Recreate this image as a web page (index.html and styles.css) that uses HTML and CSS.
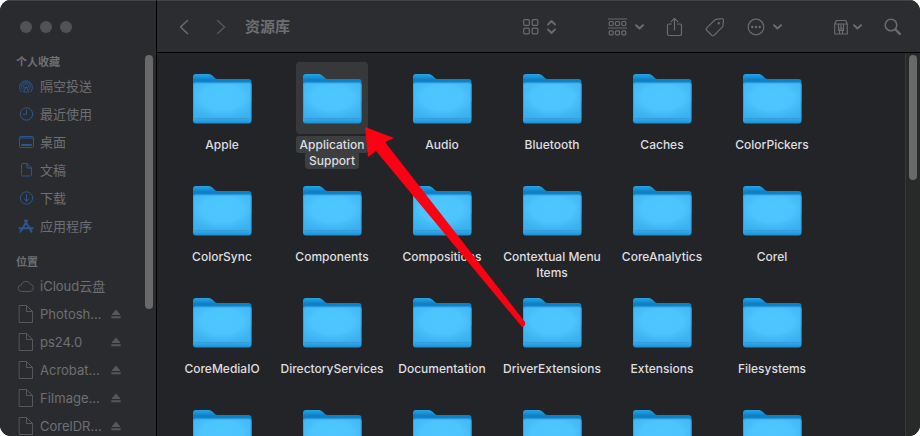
FILE: index.html
```html
<!DOCTYPE html>
<html lang="zh-CN">
<head>
<meta charset="utf-8">
<meta name="viewport" content="width=device-width, initial-scale=1">
<title>资源库</title>
<link rel="stylesheet" href="styles.css">
</head>
<body>
<svg class="defs" width="0" height="0" aria-hidden="true">
  <defs>
    <linearGradient id="back" x1="0" y1="0" x2="0" y2="1">
      <stop offset="0" stop-color="#27a5e8"/><stop offset=".2" stop-color="#0f80c6"/><stop offset="1" stop-color="#0f80c6"/>
    </linearGradient>
    <linearGradient id="edge" x1="0" y1="0" x2="0" y2="1">
      <stop offset="0" stop-color="#44bbf6"/><stop offset=".85" stop-color="#3bafee"/><stop offset=".93" stop-color="#2b9fe0"/><stop offset="1" stop-color="#1b8fd2"/>
    </linearGradient>
    <radialGradient id="glow" cx=".5" cy=".4" r=".75">
      <stop offset="0" stop-color="#50c6ff"/><stop offset=".5" stop-color="#4dc4fe"/><stop offset="1" stop-color="#3db3f0" stop-opacity="0"/>
    </radialGradient>
    <symbol id="folder" viewBox="0 0 72 72">
      <path fill="url(#back)" d="M7 15a3 3 0 0 1 3-3h12c2 0 3 .5 4.300 1.600l2.700 2.300c.8.700 1.500 1.100 3 1.100H62.500a3 3 0 0 1 3 3v20H7z"/>
      <path fill="url(#edge)" d="M7 23a2.500 2.500 0 0 1 2.500-2.500h53.500a2.500 2.500 0 0 1 2.500 2.500v35.500a3 3 0 0 1-3 3H10a3 3 0 0 1-3-3z"/>
      <path fill="url(#glow)" d="M8 23.500a2 2 0 0 1 2-2h52.500a2 2 0 0 1 2 2V56H8z"/>
      <path fill="none" stroke="#2695d6" stroke-opacity=".5" d="M7.500 57V23.500a2.500 2.500 0 0 1 2.500-2.500h52.500a2.500 2.500 0 0 1 2.500 2.500V57M8 56.500h57"/>
    </symbol>
    <symbol id="doc" viewBox="0 0 20 20">
      <path d="M3.500 1.500h7l6 6v11h-13zM10.500 1.500v6h6"/>
    </symbol>
    <symbol id="eject" viewBox="0 0 10 10">
      <path d="M5 .5 9.700 6H.3zM.3 7.300h9.400v2H.3z"/>
    </symbol>
    <symbol id="chevron" viewBox="0 0 9 6">
      <path d="m1 1.200 3.500 3.300L8 1.200"/>
    </symbol>
  </defs>
</svg>

<div class="window">
  <aside class="sidebar">
    <div class="lights">
      <button class="light" aria-label="关闭"></button>
      <button class="light" aria-label="最小化"></button>
      <button class="light" aria-label="缩放"></button>
    </div>
    <div class="sidebar-body">
      <nav class="places">
        <h2 class="heading">个人收藏</h2>
        <a class="place" href="#"><svg class="place-icon" viewBox="0 0 20 20"><path d="M5.300 15.800a6.500 6.500 0 1 1 9.400 0M6.800 13.600a4.500 4.500 0 1 1 6.400 0M8.300 12a2.500 2.500 0 1 1 3.400 0"/><path d="M10 10.800 7.500 16h5z"/></svg><span class="name">隔空投送</span></a>
        <a class="place" href="#"><svg class="place-icon" viewBox="0 0 20 20"><circle cx="10.500" cy="10" r="6.200"/><path d="M10.500 6v4.300H7.300"/></svg><span class="name">最近使用</span></a>
        <a class="place" href="#"><svg class="place-icon" viewBox="0 0 20 20"><rect x="3.500" y="4.500" width="14" height="11" rx="1"/><path d="M4 6h13"/><path stroke-width="2" d="M6 13h9"/></svg><span class="name">桌面</span></a>
        <a class="place" href="#"><svg class="place-icon" viewBox="0 0 20 20"><path d="M5.500 4.500a1 1 0 0 1 1-1h4.500l4.500 4.500v7a1 1 0 0 1-1 1h-8a1 1 0 0 1-1-1zM11 3.500V8h4.500"/></svg><span class="name">文稿</span></a>
        <a class="place" href="#"><svg class="place-icon" viewBox="0 0 20 20"><circle cx="10.500" cy="10" r="6.200"/><path d="M10.500 6.500v6.500M8.300 11l2.200 2.200 2.200-2.200"/></svg><span class="name">下载</span></a>
        <a class="place" href="#"><svg class="place-icon bold" viewBox="0 0 20 20"><path d="m11 4.500-5 9M9 4.500l6.500 11.200M3.500 12.300h8M14 12.300h2.500M5.200 14.300l-.9 1.500"/></svg><span class="name">应用程序</span></a>
        <h2 class="heading spaced">位置</h2>
        <a class="place" href="#"><svg class="place-icon grey" viewBox="0 0 20 20"><path d="M5.500 15.500a3.200 3.200 0 0 1-.3-6.400 4.800 4.800 0 0 1 9.100-1 3.800 3.800 0 0 1 .2 7.400z"/></svg><span class="name">iCloud云盘</span></a>
        <a class="place" href="#"><svg class="place-icon grey"><use href="#doc"/></svg><span class="name">Photosh...</span><svg class="eject"><use href="#eject"/></svg></a>
        <a class="place" href="#"><svg class="place-icon grey"><use href="#doc"/></svg><span class="name">ps24.0</span><svg class="eject"><use href="#eject"/></svg></a>
        <a class="place" href="#"><svg class="place-icon grey"><use href="#doc"/></svg><span class="name">Acrobat...</span><svg class="eject"><use href="#eject"/></svg></a>
        <a class="place" href="#"><svg class="place-icon grey"><use href="#doc"/></svg><span class="name">FiImage...</span><svg class="eject"><use href="#eject"/></svg></a>
        <a class="place" href="#"><svg class="place-icon grey"><use href="#doc"/></svg><span class="name">CorelDR...</span><svg class="eject"><use href="#eject"/></svg></a>
      </nav>
      <div class="side-track"><div class="thumb side-thumb"></div></div>
    </div>
  </aside>

  <main class="main">
    <header class="toolbar">
      <div class="nav">
        <button class="tool" aria-label="后退"><svg width="10" height="16" viewBox="0 0 10 16"><path class="mid" d="M8.500 1.500 1.500 8l7 6.500"/></svg></button>
        <button class="tool dim" aria-label="前进"><svg width="10" height="16" viewBox="0 0 10 16"><path class="mid" d="M1.500 1.500 8.500 8l-7 6.500"/></svg></button>
        <h1 class="title">资源库</h1>
      </div>
      <div class="tools">
        <button class="tool" aria-label="显示方式">
          <svg width="16" height="16" viewBox="0 0 16 16"><rect x=".7" y=".7" width="5.600" height="5.600" rx="1"/><rect x="9.200" y=".7" width="5.600" height="5.600" rx="1"/><rect x=".7" y="9.200" width="5.600" height="5.600" rx="1"/><rect x="9.200" y="9.200" width="5.600" height="5.600" rx="1"/></svg>
          <svg width="9" height="16" viewBox="0 0 9 16"><path class="bold" d="M1 5.500 4.500 2 8 5.500M1 10.500 4.500 14 8 10.500"/></svg>
        </button>
        <button class="tool apart" aria-label="分组">
          <svg width="19" height="18" viewBox="0 0 19 18"><path d="M.5 1h18M.5 10h18"/><rect x="1.200" y="3.500" width="4" height="4" rx="1"/><rect x="7.500" y="3.500" width="4" height="4" rx="1"/><rect x="13.800" y="3.500" width="4" height="4" rx="1"/><rect x="1.200" y="12.800" width="4" height="4" rx="1"/><rect x="7.500" y="12.800" width="4" height="4" rx="1"/><rect x="13.800" y="12.800" width="4" height="4" rx="1"/></svg>
          <svg class="chevron"><use href="#chevron"/></svg>
        </button>
        <button class="tool" aria-label="共享"><svg width="17" height="20" viewBox="0 0 17 20"><path d="M5.500 7H3a1.500 1.500 0 0 0-1.500 1.500v8.500A1.500 1.500 0 0 0 3 18.500h11a1.500 1.500 0 0 0 1.500-1.500V8.500A1.500 1.500 0 0 0 14 7h-2.500M8.500 13V1.500M5.200 4.700l3.300-3.300 3.300 3.300"/></svg></button>
        <button class="tool" aria-label="标签"><svg width="20" height="20" viewBox="0 0 20 20"><path d="M1.600 11.200 9.800 3a2.500 2.500 0 0 1 1.500-.7l5.500-.6a1.500 1.500 0 0 1 1.700 1.700l-.6 5.300a2.500 2.500 0 0 1-.7 1.500L9 18.400a1.500 1.500 0 0 1-2.100 0l-5.300-5.200a1.500 1.500 0 0 1 0-2z"/><circle cx="13.800" cy="6.300" r=".6"/></svg></button>
        <button class="tool" aria-label="操作">
          <svg width="18" height="18" viewBox="0 0 18 18"><circle cx="9" cy="9" r="7.800"/><g class="solid"><circle cx="5.300" cy="9" r="1.200"/><circle cx="9" cy="9" r="1.200"/><circle cx="12.700" cy="9" r="1.200"/></g></svg>
          <svg class="chevron"><use href="#chevron"/></svg>
        </button>
        <button class="tool apart tight" aria-label="压缩">
          <svg width="14" height="16" viewBox="0 0 14 16"><path d="M.7 5h12.600v10H.7zM.7 5l1.600-3.500h9.400L13.300 5M4.500 5v6.500h1v3.500M9.500 5v6.500h-1v3.500M7 6v2"/><rect x="6" y="9" width="2" height="2.500"/></svg>
          <svg class="chevron"><use href="#chevron"/></svg>
        </button>
        <button class="tool" aria-label="搜索"><svg width="17" height="17" viewBox="0 0 17 17"><circle class="mid" cx="7" cy="7" r="5.800"/><path class="heavy" d="m11.500 11.500 4.300 4.300"/></svg></button>
      </div>
    </header>

    <div class="content">
      <div class="grid">
        <button class="item"><svg class="folder"><use href="#folder"/></svg><span class="label"><span>Apple</span></span></button>
        <button class="item selected"><svg class="folder"><use href="#folder"/></svg><span class="label"><span>Application Support</span></span></button>
        <button class="item"><svg class="folder"><use href="#folder"/></svg><span class="label"><span>Audio</span></span></button>
        <button class="item"><svg class="folder"><use href="#folder"/></svg><span class="label"><span>Bluetooth</span></span></button>
        <button class="item"><svg class="folder"><use href="#folder"/></svg><span class="label"><span>Caches</span></span></button>
        <button class="item"><svg class="folder"><use href="#folder"/></svg><span class="label"><span>ColorPickers</span></span></button>
        <button class="item"><svg class="folder"><use href="#folder"/></svg><span class="label"><span>ColorSync</span></span></button>
        <button class="item"><svg class="folder"><use href="#folder"/></svg><span class="label"><span>Components</span></span></button>
        <button class="item"><svg class="folder"><use href="#folder"/></svg><span class="label"><span>Compositions</span></span></button>
        <button class="item"><svg class="folder"><use href="#folder"/></svg><span class="label"><span>Contextual Menu Items</span></span></button>
        <button class="item"><svg class="folder"><use href="#folder"/></svg><span class="label"><span>CoreAnalytics</span></span></button>
        <button class="item"><svg class="folder"><use href="#folder"/></svg><span class="label"><span>Corel</span></span></button>
        <button class="item"><svg class="folder"><use href="#folder"/></svg><span class="label"><span>CoreMediaIO</span></span></button>
        <button class="item"><svg class="folder"><use href="#folder"/></svg><span class="label"><span>DirectoryServices</span></span></button>
        <button class="item"><svg class="folder"><use href="#folder"/></svg><span class="label"><span>Documentation</span></span></button>
        <button class="item"><svg class="folder"><use href="#folder"/></svg><span class="label"><span>DriverExtensions</span></span></button>
        <button class="item"><svg class="folder"><use href="#folder"/></svg><span class="label"><span>Extensions</span></span></button>
        <button class="item"><svg class="folder"><use href="#folder"/></svg><span class="label"><span>Filesystems</span></span></button>
        <button class="item" aria-label="文件夹"><svg class="folder"><use href="#folder"/></svg></button>
        <button class="item" aria-label="文件夹"><svg class="folder"><use href="#folder"/></svg></button>
        <button class="item" aria-label="文件夹"><svg class="folder"><use href="#folder"/></svg></button>
        <button class="item" aria-label="文件夹"><svg class="folder"><use href="#folder"/></svg></button>
        <button class="item" aria-label="文件夹"><svg class="folder"><use href="#folder"/></svg></button>
        <button class="item" aria-label="文件夹"><svg class="folder"><use href="#folder"/></svg></button>
      </div>
      <div class="track"><div class="thumb"></div></div>
      <svg class="arrow" width="162" height="204" viewBox="0 0 162 204" aria-hidden="true"><path d="M0 0 29 11 20 15 160 195Q161 199 157 200L11 24 3 30z"/></svg>
    </div>
  </main>
</div>
</body>
</html>
```
FILE: styles.css
```css
* {
  box-sizing: border-box;
}

body {
  margin: 0;
  background: #fff;
  font-family: Inter, "Noto Sans CJK SC", sans-serif;
  font-size: 13px;
  color: #6e6f72;
}

button {
  margin: 0;
  padding: 0;
  border: 0;
  background: none;
  font: inherit;
  color: inherit;
}

svg {
  display: block;
  flex: none;
}

.defs {
  position: absolute;
}

.window {
  display: flex;
  height: 100vh;
  overflow: hidden;
  border-radius: 11px;
  background: #232427;
}

/* Sidebar */
.sidebar {
  display: flex;
  flex-direction: column;
  flex: none;
  width: 157px;
  border-top: 1px solid #434447;
  border-right: 1px solid #000;
  background: #2a2b2f;
}

.lights {
  display: flex;
  flex: none;
  align-items: center;
  gap: 8px;
  height: 51px;
  padding-left: 20px;
}

.light {
  width: 12px;
  height: 12px;
  border-radius: 50%;
  background: #515255;
}

.sidebar-body {
  display: flex;
  flex: 1;
  min-height: 0;
}

.places {
  flex: 1;
  min-width: 0;
  padding-left: 16px;
}

.heading {
  margin: 0;
  font-size: 11px;
  font-weight: 700;
  line-height: 20px;
}

.spaced {
  margin-top: 12px;
}

.place {
  display: flex;
  align-items: center;
  height: 28px;
  color: inherit;
  text-decoration: none;
}

.place-icon {
  width: 20px;
  height: 20px;
  margin-right: 4px;
  fill: none;
  stroke: #2c5690;
  stroke-width: 1;
  stroke-linejoin: round;
  stroke-linecap: round;
}

.place-icon.bold {
  stroke-width: 2;
}

.place-icon.grey {
  stroke: #56575a;
}

.name {
  width: 71px;
  line-height: 20px;
  white-space: nowrap;
}

.eject {
  width: 10px;
  height: 10px;
  fill: #56575a;
}

.side-track {
  flex: none;
  width: 11px;
  padding-top: 3px;
}

.thumb {
  width: 8px;
  height: 125px;
  border-radius: 4px;
  background: #69696a;
}

.side-thumb {
  height: 254px;
}

/* Toolbar */
.main {
  display: flex;
  flex: 1;
  flex-direction: column;
  min-width: 0;
}

.toolbar {
  display: flex;
  flex: none;
  align-items: center;
  justify-content: space-between;
  height: 53px;
  padding: 0 19px 0 22px;
  border-top: 1px solid #434447;
  border-bottom: 1px solid #000;
  background: #2c2d30;
}

.nav,
.tools {
  display: flex;
  align-items: center;
}

.nav .tool {
  margin-right: 27px;
}

.nav .dim {
  margin-right: 19px;
}

.title {
  margin: 0;
  font-size: 15px;
  font-weight: 700;
  line-height: 20px;
}

.tools {
  gap: 22px;
}

.tool {
  display: flex;
  align-items: center;
  gap: 8px;
  fill: none;
  stroke: #6a6b6e;
  stroke-width: 1.2;
  stroke-linecap: round;
  stroke-linejoin: round;
}

.dim {
  stroke: #55565a;
}

.apart {
  margin-left: 30px;
}

.tight {
  gap: 5px;
}

.chevron {
  width: 9px;
  height: 6px;
  stroke-width: 2;
}

.mid {
  stroke-width: 1.5;
}

.tool .bold {
  stroke-width: 1.8;
}

.heavy {
  stroke-width: 2.4;
}

.solid {
  fill: #6a6b6e;
  stroke: none;
}

/* Folder grid */
.content {
  position: relative;
  display: flex;
  flex: 1;
  min-height: 0;
}

.grid {
  display: grid;
  flex: 1;
  grid-template-columns: repeat(auto-fill, 110px);
  grid-auto-rows: 112px;
  padding: 9px 10px 0;
  overflow: hidden;
}

.item {
  display: flex;
  flex-direction: column;
  align-items: center;
  gap: 3px;
  color: #dedfe0;
}

.folder {
  width: 72px;
  height: 72px;
  border-radius: 4px;
}

.label {
  font-size: 12px;
  font-weight: 500;
  line-height: 16px;
  text-align: center;
}

.selected .folder {
  background: #37383a;
}

.selected .label span {
  padding: 1px 4px;
  border-radius: 3px;
  background: #3d3e40;
  -webkit-box-decoration-break: clone;
  box-decoration-break: clone;
}

.track {
  flex: none;
  width: 15px;
  padding: 2px 0 0 3px;
  border-left: 1px solid #38393b;
  background: #282929;
}

.arrow {
  position: absolute;
  top: 74px;
  left: 208px;
  fill: #fc0014;
}
```
